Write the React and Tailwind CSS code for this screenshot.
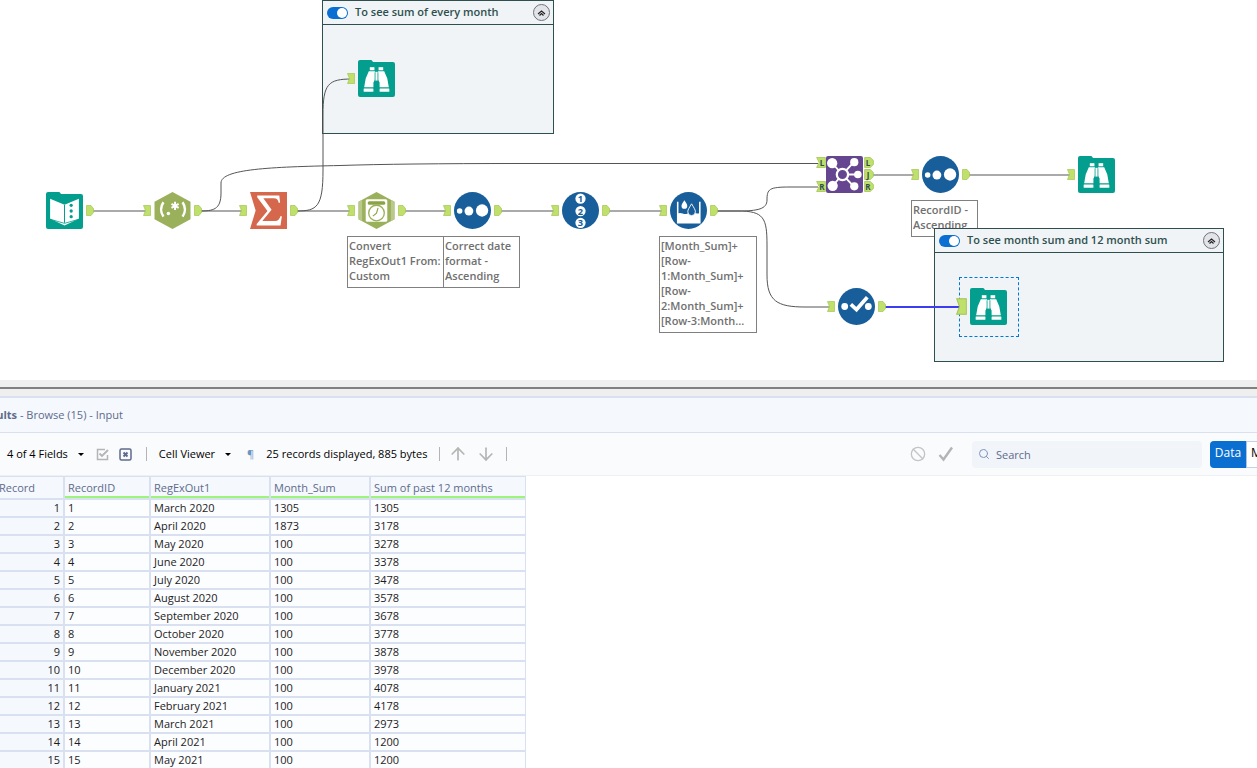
import React, { useState } from 'react';
import { ArrowUp, ArrowDown, Ban, Search } from 'lucide-react';

const FIELDS = ['RecordID', 'RegExOut1', 'Month_Sum', 'Sum of past 12 months'];

const RECORDS = [
  ['1', 'March 2020', '1305', '1305'],
  ['2', 'April 2020', '1873', '3178'],
  ['3', 'May 2020', '100', '3278'],
  ['4', 'June 2020', '100', '3378'],
  ['5', 'July 2020', '100', '3478'],
  ['6', 'August 2020', '100', '3578'],
  ['7', 'September 2020', '100', '3678'],
  ['8', 'October 2020', '100', '3778'],
  ['9', 'November 2020', '100', '3878'],
  ['10', 'December 2020', '100', '3978'],
  ['11', 'January 2021', '100', '4078'],
  ['12', 'February 2021', '100', '4178'],
  ['13', 'March 2021', '100', '2973'],
  ['14', 'April 2021', '100', '1200'],
  ['15', 'May 2021', '100', '1200'],
];

/* ---------- tool icons, all on a 36x36 grid ---------- */

function FolderTile({ children }) {
  return (
    <svg viewBox="0 0 36 36" className="size-full">
      <path d="M2 0h10.500q1 0 1.500 1l.5 1H34q2 0 2 2v30q0 2-2 2H2q-2 0-2-2V2q0-2 2-2z" fill="#049e8e" />
      {children}
    </svg>
  );
}

function InputIcon() {
  return (
    <FolderTile>
      <path d="M4 6.500 18 12.500 32 6.500V26L18 32.500 4 26z" fill="#fff" />
      <path d="M18 12.500V30" stroke="#049e8e" strokeWidth="1" />
      <path d="M4 26.500 18 30.500 32 26.500" stroke="#049e8e" strokeWidth=".8" fill="none" />
      <g fill="#049e8e">
        <circle cx="24.500" cy="13" r="1.600" />
        <circle cx="24.500" cy="18.500" r="1.600" />
        <circle cx="24.500" cy="24" r="1.600" />
      </g>
    </FolderTile>
  );
}

function BrowseIcon() {
  return (
    <FolderTile>
      <g fill="#fff">
        <rect x="11.500" y="7" width="4.500" height="3" />
        <rect x="20" y="7" width="4.500" height="3" />
        <path d="M10.500 11h6v8l-1.500 3v4.500H6L7.500 18z" />
        <path d="M25.500 11h-6v8l1.500 3v4.500h9L28.500 18z" />
        <rect x="16.800" y="11.500" width="2.400" height="8.500" />
        <rect x="5.500" y="27.700" width="9.500" height="3.300" rx=".5" />
        <rect x="21" y="27.700" width="9.500" height="3.300" rx=".5" />
      </g>
      <path d="M16.500 12v8M19.500 12v8" stroke="#049e8e" strokeWidth=".6" />
    </FolderTile>
  );
}

function Hexagon({ children }) {
  return (
    <svg viewBox="0 0 36 36" className="size-full">
      <path d="M18 0 35.500 9.500V26.500L18 36 .5 26.500V9.500z" fill="#9bb05a" />
      {children}
    </svg>
  );
}

function RegexIcon() {
  return (
    <Hexagon>
      <g stroke="#fff" fill="none" strokeWidth="2.400">
        <path d="M9.200 10Q4.500 17 9.200 24" />
        <path d="M27.800 10Q32.500 17 27.800 24" />
        <path d="M20.500 9.500v8M17 11.500l7 4M24 11.500l-7 4" strokeWidth="1.900" />
      </g>
      <circle cx="14" cy="21" r="1.700" fill="#fff" />
    </Hexagon>
  );
}

function DateTimeIcon() {
  return (
    <Hexagon>
      <path d="M.5 9.500 4 7.500v21L.5 26.500zM35.500 9.500 32 7.500v21l3.500-2z" fill="#b9c98b" />
      <rect x="7.500" y="7" width="21" height="22" rx="1.500" fill="#fff" />
      <rect x="9.500" y="9" width="17" height="3.500" rx="1.500" fill="#8ba344" />
      <circle cx="18" cy="20.500" r="7.600" fill="#fff" stroke="#9bb05a" strokeWidth="1.300" />
      <path d="M19.500 15.500 18 20.500l-3.500 3" stroke="#8ba344" strokeWidth="1.100" fill="none" />
    </Hexagon>
  );
}

function SummarizeIcon() {
  return (
    <svg viewBox="0 0 36 36" className="size-full">
      <path d="M0 0h36v36H0l5.500-18z" fill="#d5674c" />
      <path
        d="M7 3.500h21.500l.8 7h-1.400q-.7-4.300-4.700-4.300H13l8 11-9 11h12.500q4 0 5-4.700h1.500l-1.300 9H6.500v-1.300L17 18.500 7 5z"
        fill="#fff"
      />
    </svg>
  );
}

function Disc({ children }) {
  return (
    <svg viewBox="0 0 36 36" className="size-full">
      <circle cx="18" cy="18" r="18" fill="#175e9a" />
      {children}
    </svg>
  );
}

function SortIcon() {
  return (
    <Disc>
      <g fill="#fff">
        <circle cx="5.500" cy="18.500" r="2.700" />
        <circle cx="14.500" cy="18.500" r="4.300" />
        <circle cx="27.300" cy="18" r="6" />
      </g>
    </Disc>
  );
}

function RecordIdIcon() {
  return (
    <Disc>
      {[6.5, 18.5, 30].map((y, i) => (
        <g key={y}>
          <circle cx="18" cy={y} r="5" fill="#fff" />
          <text
            x="18"
            y={y + 3.5}
            textAnchor="middle"
            fontSize="9"
            fontWeight="700"
            fontFamily="Open Sans, sans-serif"
            fill="#175e9a"
          >
            {i + 1}
          </text>
        </g>
      ))}
    </Disc>
  );
}

function MultiRowIcon() {
  return (
    <Disc>
      <path d="M7.500 9.500v20.500h21.500V9.500" stroke="#fff" strokeWidth="1.500" fill="none" />
      <path d="M7.500 21c3-1.500 5 .5 7.500.5s3-2 6-2 4 2.500 8 1V30H7.500z" fill="#fff" />
      <path d="M14 8c1.700 2.500 2.800 4 2.800 5.500a2.800 2.800 0 0 1-5.600 0C11.200 12 12.300 10.500 14 8z" fill="#fff" />
      <path
        d="M21 11.500c2 3.500 3.700 5.500 3.700 7.800a3.700 3.700 0 0 1-7.400 0c0-2.300 1.700-4.300 3.700-7.800z"
        fill="#175e9a"
        stroke="#fff"
        strokeWidth=".9"
      />
    </Disc>
  );
}

function SelectIcon() {
  return (
    <Disc>
      <circle cx="6.500" cy="18" r="3.300" fill="#fff" />
      <circle cx="29.500" cy="18" r="3.300" fill="#fff" />
      <path d="M12.500 16 18 21 28.500 9" stroke="#fff" strokeWidth="3.600" fill="none" />
    </Disc>
  );
}

function JoinIcon() {
  return (
    <svg viewBox="0 0 36 36" className="size-full">
      <rect width="36" height="36" rx="2" fill="#654590" />
      <g stroke="#fff" strokeWidth="1.800">
        <path d="M6 7 16 18M27 6 16 18M31 18H16M27 29.500 16 18M6 29.500 16 18" />
      </g>
      <g fill="#fff">
        <circle cx="6" cy="7" r="5" />
        <circle cx="6.500" cy="29" r="5" />
        <circle cx="27.500" cy="6" r="4" />
        <circle cx="31" cy="18" r="3.700" />
        <circle cx="27.500" cy="29.500" r="4" />
      </g>
      <circle cx="16" cy="18" r="5.500" fill="#654590" stroke="#fff" strokeWidth="2.200" />
    </svg>
  );
}

/* ---------- canvas ---------- */

function InAnchor({ label, className }) {
  return (
    <span className={`absolute ${className}`}>
      <svg viewBox="0 0 8 11" preserveAspectRatio="none" className="absolute inset-0 size-full">
        <path d="M.5.5h7v10h-7l2-5z" fill="#bfe06a" stroke="#a3c453" strokeWidth=".7" />
      </svg>
      {label && <b className="relative block pl-0.5 text-center text-[8px] leading-[11px] text-[#2f4f4f]">{label}</b>}
    </span>
  );
}

function OutAnchor({ label, className }) {
  return (
    <span className={`absolute ${className}`}>
      <svg viewBox="0 0 8 11" preserveAspectRatio="none" className="absolute inset-0 size-full">
        <path d="M.5.5h4.500l2.500 3v4l-2.500 3H.5z" fill="#bfe06a" stroke="#a3c453" strokeWidth=".7" />
      </svg>
      {label && <b className="relative block pr-0.5 text-center text-[8px] leading-[11px] text-[#2f4f4f]">{label}</b>}
    </span>
  );
}

function Tool({ icon: Icon, className, input = true, output = true, selected = false }) {
  return (
    <div className={`absolute size-[37px] ${className}`}>
      {selected && (
        <div className="absolute -left-[11px] -top-[11px] size-[60px] border border-dashed border-[#0078d7]" />
      )}
      <Icon />
      {input && <InAnchor className={selected ? '-left-3.5 top-2.5 h-[17px] w-[11px]' : '-left-[11px] top-[13px] h-[11px] w-2'} />}
      {output && <OutAnchor className="-right-[11px] top-[13px] h-[11px] w-2" />}
    </div>
  );
}

function Note({ className, children }) {
  return (
    <div className={`absolute whitespace-nowrap border border-[#808080] bg-white px-px pt-px text-[11px] font-semibold leading-[15px] text-[#707070] ${className}`}>
      {children}
    </div>
  );
}

function Container({ title, className }) {
  const [enabled, setEnabled] = useState(true);

  return (
    <section className={`absolute border border-[#2f4f4f] bg-[#f0f4f6] ${className}`}>
      <header className="flex h-6 items-center border-b border-[#2f4f4f] pl-1 pr-[3px]">
        <button
          type="button"
          role="switch"
          aria-checked={enabled}
          aria-label={title}
          onClick={() => setEnabled(!enabled)}
          className={`flex h-3 w-[21px] items-center rounded-full px-px ${enabled ? 'justify-end bg-[#0b6fd1]' : 'bg-gray-400'}`}
        >
          <span className="size-2.5 rounded-full bg-white" />
        </button>
        <h2 className="ml-[7px] text-[11px] font-semibold text-[#2f4f4f]">{title}</h2>
        <button
          type="button"
          aria-label="Collapse"
          className="ml-auto grid size-[17px] place-items-center rounded-full border border-[#6f7278] bg-[#e2e4ea]"
        >
          <svg viewBox="0 0 9 6" className="h-1.5 w-[9px]" fill="none" stroke="#222" strokeWidth="1.200">
            <path d="M1 4 4.500 1 8 4M2.500 5.500l2-2 2 2" />
          </svg>
        </button>
      </header>
    </section>
  );
}

function Canvas() {
  return (
    <main className="relative h-[380px] shrink-0 overflow-hidden bg-white">
      <Note className="left-[911px] top-[200px] h-[37px] w-[67px]">
        RecordID -
        <br />
        Ascending
      </Note>
      <Container title="To see sum of every month" className="left-[322px] top-0 h-[134px] w-[232px]" />
      <Container title="To see month sum and 12 month sum" className="left-[934px] top-[228px] h-[134px] w-[290px]" />

      <svg className="absolute inset-0 size-full" fill="none" stroke="#555" strokeWidth="1">
        <g stroke="#aaa" strokeWidth="2">
          <path d="M93 211H147M199 211H244M297 211H352M405 211H448M501 211H556M609 211H664" />
          <path d="M873 175H915M969 175H1072" />
        </g>
        <path d="M199 211C213 211 221 210 221 193V183C221 169 270 167 340 165.500Q400 163.500 520 163.500H818" />
        <path d="M297 211C317 211 323 207 323 170V115C323 84 328 79 352 79" />
        <path d="M717 211H738C758 211 767 209 767 200C767 189 769 187 790 187H818" />
        <path d="M717 211H738C764 211 767 218 767 245V275C767 301 777 307 805 307H832" />
        <path d="M885 307H960" stroke="#3c3cf0" strokeWidth="2" />
      </svg>

      <Tool icon={InputIcon} className="left-[46px] top-[192px]" input={false} />
      <Tool icon={RegexIcon} className="left-[154px] top-[192px]" />
      <Tool icon={SummarizeIcon} className="left-[250px] top-[192px]" />
      <Tool icon={BrowseIcon} className="left-[358px] top-[60px]" output={false} />
      <Tool icon={DateTimeIcon} className="left-[358px] top-[192px]" />
      <Tool icon={SortIcon} className="left-[454px] top-[192px]" />
      <Tool icon={RecordIdIcon} className="left-[562px] top-[192px]" />
      <Tool icon={MultiRowIcon} className="left-[670px] top-[192px]" />
      <Tool icon={SelectIcon} className="left-[838px] top-[288px]" />
      <Tool icon={SortIcon} className="left-[922px] top-[156px]" />
      <Tool icon={BrowseIcon} className="left-[1078px] top-[156px]" output={false} />
      <Tool icon={BrowseIcon} className="left-[970px] top-[288px]" output={false} selected />

      <div className="absolute left-[826px] top-[156px] size-[37px]">
        <JoinIcon />
        <InAnchor label="L" className="-left-2.5 top-px h-[11px] w-2.5" />
        <InAnchor label="R" className="-left-2.5 top-[25px] h-[11px] w-2.5" />
        <OutAnchor label="L" className="-right-[11px] top-px h-[11px] w-2.5" />
        <OutAnchor label="J" className="-right-[11px] top-[13px] h-[11px] w-2.5" />
        <OutAnchor label="R" className="-right-[11px] top-[25px] h-[11px] w-2.5" />
      </div>

      <Note className="left-[347px] top-[236px] h-[52px] w-[97px]">
        Convert
        <br />
        RegExOut1 From:
        <br />
        Custom
      </Note>
      <Note className="left-[443px] top-[236px] h-[52px] w-[77px]">
        Correct date
        <br />
        format -
        <br />
        Ascending
      </Note>
      <Note className="left-[659px] top-[236px] h-[97px] w-[98px]">
        [Month_Sum]+
        <br />
        [Row-
        <br />
        1:Month_Sum]+
        <br />
        [Row-
        <br />
        2:Month_Sum]+
        <br />
        [Row-3:Month...
      </Note>
    </main>
  );
}

/* ---------- results window ---------- */

function Caret() {
  return <span className="border-x-[3px] border-t-[3px] border-x-transparent border-t-black" />;
}

function Divider({ className }) {
  return <span className={`h-3.5 w-px bg-[#b4b4b4] ${className}`} />;
}

function Toolbar() {
  return (
    <div className="flex h-[43px] items-center overflow-hidden border-b border-[#eef0f4] bg-[#fafbfd] pl-[7px] text-[11px] text-black">
      <button type="button" className="flex shrink-0 items-center gap-2.5">
        4 of 4 Fields <Caret />
      </button>
      <button type="button" aria-label="Select all" className="ml-3">
        <svg viewBox="0 0 13 13" className="size-[13px]" fill="none" stroke="#b4b4b4" strokeWidth="1.500">
          <path d="M9 1.500H1.500v10h10V7" />
          <path d="M3.500 5.500 6 8l6-6" strokeWidth="1.800" />
        </svg>
      </button>
      <button type="button" aria-label="Deselect all" className="ml-2.5">
        <svg viewBox="0 0 13 13" className="size-[13px]" fill="none" stroke="#5d6b8c">
          <rect x="1" y="1" width="11" height="11" rx="1.500" strokeWidth="1.500" />
          <path d="M4.500 4.500l4 4M8.500 4.500l-4 4" strokeWidth="2" />
        </svg>
      </button>
      <Divider className="ml-3.5" />
      <button type="button" className="ml-3 flex shrink-0 items-center gap-2.5">
        Cell Viewer <Caret />
      </button>
      <button type="button" aria-label="Show whitespace" className="ml-4 text-[#6f94bd]">¶</button>
      <span className="ml-3 shrink-0 whitespace-nowrap">25 records displayed, 885 bytes</span>
      <Divider className="ml-3" />
      <button type="button" aria-label="Previous" className="ml-2 text-[#b4b4b4]">
        <ArrowUp size={20} />
      </button>
      <button type="button" aria-label="Next" className="ml-2 text-[#b4b4b4]">
        <ArrowDown size={20} />
      </button>
      <Divider className="ml-2.5" />

      <button type="button" aria-label="Cancel" className="ml-auto text-[#c4c4c4]">
        <Ban size={16} />
      </button>
      <button type="button" aria-label="Apply" className="ml-3 text-[#b4b4b4]">
        <svg viewBox="0 0 16 16" className="size-4" fill="none" stroke="currentColor" strokeWidth="2.400">
          <path d="M1.500 9 5.500 13.500 14 1.500" />
        </svg>
      </button>
      <label className="ml-[18px] flex h-[27px] w-[230px] shrink-0 items-center gap-1.5 rounded bg-[#f1f4f9] px-1.5">
        <Search size={12} className="shrink-0 text-[#7d95bf]" />
        <input
          type="text"
          aria-label="Search"
          placeholder="Search"
          className="w-full bg-transparent pt-0.5 outline-none placeholder:text-[#5d6b8c]"
        />
      </label>
      <div className="ml-2 -mr-[61px] flex h-[27px] shrink-0 text-xs">
        <button type="button" className="w-[37px] rounded-l-sm border-r border-[#aac4e6] bg-[#0b6fd1] pb-0.5 text-white">
          Data
        </button>
        <button type="button" className="w-[71px] border border-l-0 border-[#c3d2ea] bg-white pb-0.5 pl-1 text-left">
          Metadata
        </button>
      </div>
    </div>
  );
}

function ResultsTable() {
  return (
    <table className="table-fixed border-separate border-spacing-0 border-t border-[#d9e1f0] text-left text-[11px] leading-4 text-[#1c1c1c]">
      <colgroup>
        <col className="w-[65px]" />
        <col className="w-[86px]" />
        <col className="w-[120px]" />
        <col className="w-[100px]" />
        <col className="w-[155px]" />
      </colgroup>
      <thead className="bg-[#f5f8fd] text-[#5d6b8c]">
        <tr>
          <th scope="col" className="border-b-2 border-r-2 border-[#d9e1f0] p-0 font-normal">
            <div className="-ml-px h-[21px] pt-[3px]">Record</div>
          </th>
          {FIELDS.map((field) => (
            <th key={field} scope="col" className="border-b-2 border-r-2 border-[#d9e1f0] p-0 font-normal last:border-r">
              <div className="h-[21px] whitespace-nowrap border-b-2 border-[#9df47a] pl-[3px] pt-[3px]">{field}</div>
            </th>
          ))}
        </tr>
      </thead>
      <tbody>
        {RECORDS.map((record, i) => (
          <tr key={record[0]}>
            <th scope="row" className="border-b-2 border-r-2 border-[#d9e1f0] bg-[#f5f8fd] p-0 pr-[3px] text-right font-normal">
              {i + 1}
            </th>
            {record.map((value, j) => (
              <td key={j} className="border-b-2 border-r-2 border-[#d9e1f0] bg-[#fcfdff] p-0 pl-[3px] last:border-r">
                {value}
              </td>
            ))}
          </tr>
        ))}
      </tbody>
    </table>
  );
}

export default function App() {
  return (
    <div className="flex h-screen flex-col overflow-hidden bg-white font-['Open_Sans',sans-serif]">
      <Canvas />
      <div className="h-4 shrink-0 bg-[#efefef] pt-[7px]">
        <div className="h-0.5 bg-[#808080]" />
      </div>
      <section className="min-h-0 flex-1 overflow-hidden border-t-2 border-[#d9e1f0]">
        <header className="flex h-[35px] items-center border-b border-[#d9e1f0] bg-[#f5f8fd] text-[11px] text-[#5d6b8c]">
          <h2 className="-ml-[23px] whitespace-pre">
            <b>Results</b> - Browse (15) - Input
          </h2>
        </header>
        <Toolbar />
        <ResultsTable />
      </section>
    </div>
  );
}
